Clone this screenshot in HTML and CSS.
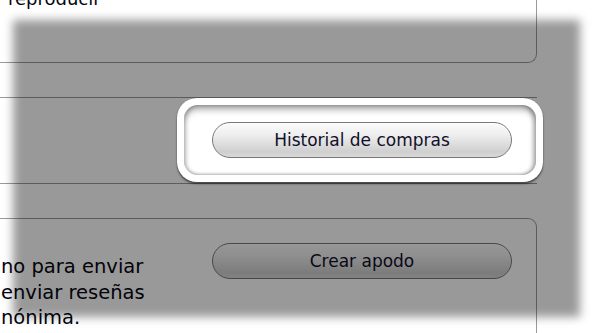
FILE: index.html
```html
<!DOCTYPE html>
<html lang="es">
<head>
    <meta charset="UTF-8">
    <meta name="viewport" content="width=device-width, initial-scale=1.0">
    <title>Cuenta - Historial de compras</title>
    <link rel="stylesheet" href="styles.css">
</head>
<body>
    <div class="page">
        <div class="panel panel-top">
            <p class="panel-text">reproducir</p>
        </div>

        <div class="row">
            <div class="spot">
                <div class="spot-in">
                    <button class="btn">Historial de compras</button>
                </div>
            </div>
        </div>

        <div class="panel panel-bottom">
            <p class="desc">
                no para enviar<br>
                enviar reseñas<br>
                nónima.
            </p>
            <button class="btn">Crear apodo</button>
        </div>
    </div>

    <!-- dimmed backdrop, the spot sits above it -->
    <div class="dim"></div>
</body>
</html>
```

FILE: styles.css
```css
* {
    margin: 0;
    padding: 0;
    box-sizing: border-box;
}

body {
    font-family: 'DejaVu Sans', Verdana, sans-serif;
    color: #050510;
    background: #fff;
    width: 600px;
    height: 333px;
    overflow: hidden;
    position: relative;
}

.page {
    width: 537px;
}

.panel {
    border-color: #9a9a9a;
    border-style: solid;
    border-width: 0;
}

.panel-top {
    height: 63px;
    border-right-width: 1px;
    border-bottom-width: 1px;
    border-bottom-right-radius: 9px;
    padding-left: 8px;
    overflow: hidden;
}

.panel-text {
    font-size: 18px;
    line-height: 22px;
    margin-top: -12px;
}

.row {
    margin-top: 34px;
    height: 87px;
    border-top: 1px solid #9a9a9a;
    border-bottom: 1px solid #9a9a9a;
    display: flex;
    justify-content: flex-end;
}

.spot {
    position: relative;
    z-index: 2;
    width: 366px;
    height: 84px;
    margin-right: -6px;
    padding: 7px;
    background: #fff;
    border-radius: 20px;
    box-shadow: 0 2px 2px rgba(0, 0, 0, 0.5), 0 0 1px rgba(0, 0, 0, 0.3);
}

.spot-in {
    height: 100%;
    border-radius: 14px;
    padding: 17px 24px 0 28px;
    box-shadow: inset 0 6px 7px -2px rgba(0, 0, 0, 0.38),
                inset -4px 0 4px -1px rgba(0, 0, 0, 0.26),
                inset 3px 0 4px -1px rgba(0, 0, 0, 0.2),
                inset 0 -2px 3px -1px rgba(0, 0, 0, 0.18);
}

.btn {
    display: block;
    width: 300px;
    height: 36px;
    border-radius: 18px;
    border: 1px solid #777;
    background: linear-gradient(to bottom, #fbfbfb 0%, #eeeeee 35%, #cfcfcf 85%, #d9d9d9 100%);
    box-shadow: inset 0 1px 0 #fff;
    font-family: 'DejaVu Sans', Verdana, sans-serif;
    font-size: 17px;
    color: #10102a;
    text-align: center;
    cursor: pointer;
}

.panel-bottom {
    margin-top: 34px;
    min-height: 200px;
    border-top-width: 1px;
    border-right-width: 1px;
    border-top-right-radius: 9px;
    display: flex;
    justify-content: space-between;
    align-items: flex-start;
    padding: 24px 24px 0 1px;
}

.desc {
    font-size: 19.5px;
    line-height: 25.5px;
    margin-top: 11px;
}

.dim {
    position: absolute;
    z-index: 1;
    left: 13px;
    top: 20px;
    right: 20px;
    bottom: 16px;
    background: rgba(0, 0, 0, 0.4);
    filter: blur(5px);
}
```
